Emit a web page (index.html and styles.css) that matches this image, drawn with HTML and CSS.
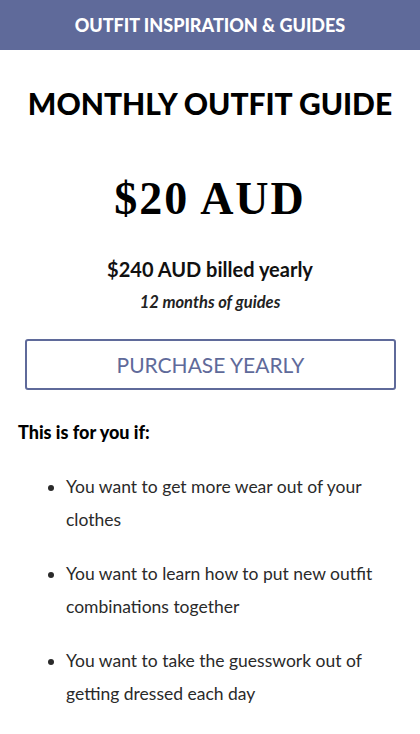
FILE: index.html
```html
<!DOCTYPE html>
<html lang="en">
<head>
<meta charset="utf-8">
<title>Monthly Outfit Guide</title>
<link rel="stylesheet" href="styles.css">
</head>
<body>
<header class="topbar">OUTFIT INSPIRATION &amp; GUIDES</header>
<main class="plan">
  <h1 class="plan-title">MONTHLY OUTFIT GUIDE</h1>
  <div class="plan-price">$20 AUD</div>
  <p class="plan-billed">$240 AUD billed yearly</p>
  <p class="plan-note">12 months of guides</p>
  <a class="plan-button" href="#">PURCHASE YEARLY</a>
  <h2 class="fit-title">This is for you if:</h2>
  <ul class="fit-list">
    <li>You want to get more wear out of your clothes</li>
    <li>You want to learn how to put new outfit combinations together</li>
    <li>You want to take the guesswork out of getting dressed each day</li>
  </ul>
</main>
</body>
</html>
```
FILE: styles.css
```css
* { box-sizing: border-box; }
html, body { margin: 0; padding: 0; background: #fff; }
body {
  font-family: Lato, "Noto Sans", sans-serif;
  color: #111;
}
.topbar {
  height: 50px;
  background: #5f6a9a;
  color: #fff;
  font-weight: 900;
  font-size: 18px;
  display: flex;
  align-items: center;
  justify-content: center;
}
.plan {
  display: flex;
  flex-direction: column;
  align-items: center;
  padding: 0 24px;
}
.plan-title {
  margin: 35px 0 0;
  font-size: 30px;
  line-height: 36px;
  font-weight: 900;
  color: #000;
}
.plan-price {
  margin-top: 53px;
  font-family: "Liberation Serif", "DejaVu Serif", serif;
  font-weight: 700;
  font-size: 46px;
  line-height: 50px;
  letter-spacing: 2px;
  color: #000;
}
.plan-billed {
  margin: 32px 0 0;
  font-size: 20px;
  line-height: 26px;
  font-weight: 700;
}
.plan-note {
  margin: 9px 0 0;
  font-size: 16.5px;
  line-height: 22px;
  font-style: italic;
  font-weight: 700;
  color: #222;
}
.plan-button {
  align-self: stretch;
  margin: 26px 0 0 1px;
  height: 51px;
  border: 2px solid #5f6a9a;
  border-radius: 3px;
  display: flex;
  align-items: center;
  justify-content: center;
  color: #5f6a9a;
  font-size: 21px;
  text-decoration: none;
}
.fit-title {
  align-self: stretch;
  margin: 30px 0 0 -6px;
  font-size: 18px;
  line-height: 24px;
  font-weight: 900;
  color: #000;
}
.fit-list {
  align-self: stretch;
  margin: 26px 0 0;
  padding: 0 20px 0 42px;
  font-size: 17.5px;
  line-height: 33px;
  color: #2a2a2a;
}
.fit-list li { margin-bottom: 21px; }
```
